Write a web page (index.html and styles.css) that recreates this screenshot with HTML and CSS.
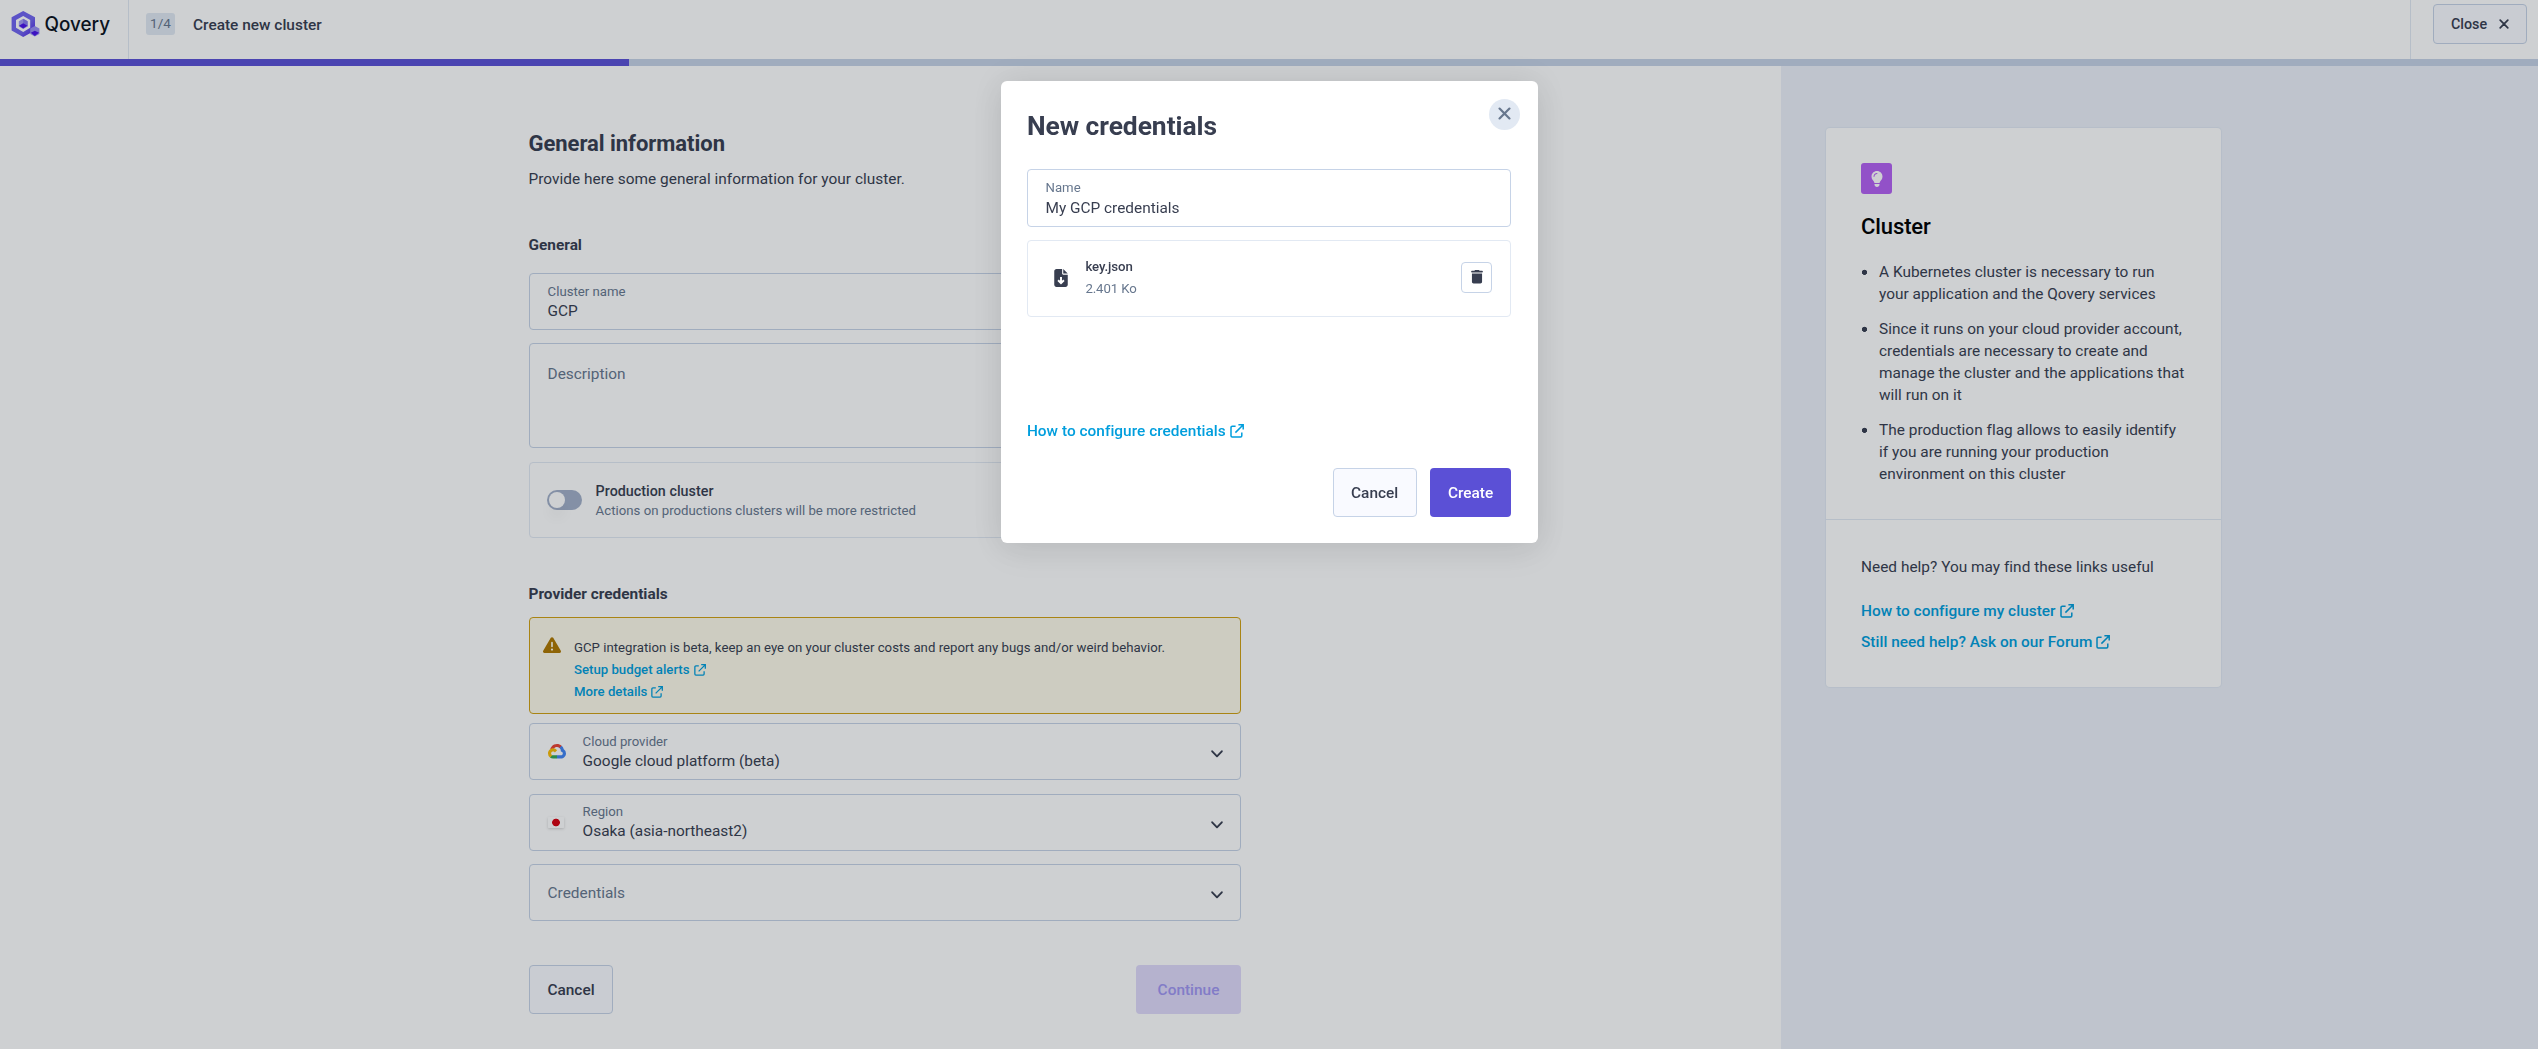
FILE: index.html
```html
<!DOCTYPE html>
<html lang="en">
<head>
<meta charset="utf-8">
<title>Create new cluster - Qovery</title>
<link rel="stylesheet" href="styles.css">
</head>
<body>
<svg class="sprite" aria-hidden="true">
  <symbol id="external" viewBox="0 0 14 14"><path d="M5.6 2.2H2.2a1.2 1.2 0 0 0-1.2 1.2v8.4A1.2 1.2 0 0 0 2.2 13h8.4a1.2 1.2 0 0 0 1.2-1.2V8.6M8.4.8h4.8v4.8M13 1 5.4 8.6" fill="none" stroke="currentColor" stroke-width="1.5"/></symbol>
  <symbol id="cross" viewBox="0 0 10 10"><path d="M1.2 1.2l7.6 7.6M8.8 1.2L1.2 8.8" fill="none" stroke="currentColor" stroke-width="1.7" stroke-linecap="round"/></symbol>
  <symbol id="chevron" viewBox="0 0 12 8"><path d="M1.2 1.3 6 6.3l4.8-5" fill="none" stroke="currentColor" stroke-width="1.9" stroke-linecap="round" stroke-linejoin="round"/></symbol>
</svg>

<div class="app">
  <header class="topbar">
    <div class="brand">
      <svg width="100" height="30" viewBox="0 0 100 30">
        <defs>
          <linearGradient id="ring" x1="0" y1="0" x2="1" y2="1"><stop offset="0" stop-color="#6f60f5"/><stop offset=".6" stop-color="#7266ef"/><stop offset="1" stop-color="#4f1ee6"/></linearGradient>
        </defs>
        <path fill="url(#ring)" fill-rule="evenodd" d="M12.2 1 24 7.2v13.2L12.2 27 .6 20.4V7.2zM12.2 6 5 9.900v7.900L12.200 22l7-4.200V9.900z"/>
        <path fill="#a49cf5" d="M12.200 8.800 16.600 11.200v5.200l-4.400 2.500-4.400-2.500v-5.200z"/>
        <path fill="#8578f0" d="M12.200 8.800 16.600 11.200v5.200l-4.400-2z"/>
        <path fill="#4a12ea" d="M12.200 13.200 16.400 15.700l-4.200 2.900L8 15.700z"/>
        <path fill="#9a90f4" d="M23.800 16 28.400 18.500v5.400l-4.600 2.600-4.600-2.600v-5.400z"/>
        <path fill="#4a12ea" d="M23.800 20.800 28 22.800 23.800 26l-4-3.200z"/>
        <text class="wordmark" x="33.500" y="21" textLength="65.500" lengthAdjust="spacingAndGlyphs">Qovery</text>
      </svg>
    </div>
    <div class="step">
      <span class="badge">1/4</span>
      <span class="step-title">Create new cluster</span>
    </div>
    <div class="topbar-end">
      <button class="close-flow">Close <svg width="10" height="10"><use href="#cross"/></svg></button>
    </div>
  </header>
  <div class="progress"><div class="progress-fill" style="width:629px"></div></div>

  <div class="columns">
    <main class="content">
      <form class="form">
        <h1>General information</h1>
        <p class="lead">Provide here some general information for your cluster.</p>

        <h2 class="first">General</h2>
        <div class="field"><div class="texts"><span class="label">Cluster name</span><span class="value">GCP</span></div></div>
        <div class="field area"><span class="placeholder">Description</span></div>
        <div class="toggle-card">
          <span class="toggle"></span>
          <div><div class="toggle-title">Production cluster</div><div class="toggle-text">Actions on productions clusters will be more restricted</div></div>
        </div>

        <h2 class="second">Provider credentials</h2>
        <div class="callout">
          <svg class="warn" width="18" height="18" viewBox="0 0 512 512"><path fill="currentColor" d="M256 32c14.200 0 27.300 7.500 34.500 19.800l216 368c7.300 12.400 7.300 27.700.2 40.100S486.300 480 472 480H40c-14.300 0-27.600-7.700-34.700-20.100s-7-27.800.2-40.100l216-368C228.700 39.500 241.800 32 256 32zm0 128c-13.300 0-24 10.700-24 24v112c0 13.300 10.700 24 24 24s24-10.700 24-24V184c0-13.300-10.700-24-24-24zm32 224a32 32 0 1 0-64 0 32 32 0 1 0 64 0z"/></svg>
          <div>
            <div>GCP integration is beta, keep an eye on your cluster costs and report any bugs and/or weird behavior.</div>
            <a class="link">Setup budget alerts <svg width="12" height="12"><use href="#external"/></svg></a>
            <a class="link">More details <svg width="12" height="12"><use href="#external"/></svg></a>
          </div>
        </div>

        <div class="field select provider">
          <span class="glyph"><svg width="18" height="14.500" viewBox="0 0 256 206"><path fill="#EA4335" d="M170.252 56.819l22.253-22.253 1.483-9.370C153.437-11.677 88.976-7.496 52.420 33.920 42.267 45.423 34.734 59.764 30.717 74.573l7.970-1.123 44.505-7.340 3.436-3.513c19.797-21.742 53.270-24.667 76.128-6.168z"/><path fill="#4285F4" d="M224.205 73.918a100.249 100.249 0 0 0-30.217-48.722l-31.232 31.232a55.515 55.515 0 0 1 20.379 44.037v5.544c15.350 0 27.797 12.445 27.797 27.796 0 15.352-12.446 27.573-27.797 27.573h-55.671l-5.466 5.934v33.340l5.466 5.231h55.670c39.930.311 72.553-31.494 72.864-71.424a72.303 72.303 0 0 0-31.793-60.541"/><path fill="#34A853" d="M71.870 205.796h55.593V161.290H71.870a27.275 27.275 0 0 1-11.400-2.498l-7.887 2.420-22.409 22.252-1.952 7.574a71.980 71.980 0 0 0 43.648 14.758"/><path fill="#FBBC05" d="M71.870 61.425C31.940 61.664-.237 94.228.001 134.158a72.301 72.301 0 0 0 28.222 56.880l32.248-32.246c-13.990-6.322-20.208-22.786-13.887-36.776 6.320-13.990 22.786-20.208 36.775-13.888a27.796 27.796 0 0 1 13.887 13.888l32.248-32.248A72.224 72.224 0 0 0 71.870 61.425"/></svg></span>
          <div class="texts"><span class="label">Cloud provider</span><span class="value">Google cloud platform (beta)</span></div>
          <svg class="chevron" width="12" height="8"><use href="#chevron"/></svg>
        </div>
        <div class="field select region">
          <span class="glyph"><span class="flag"></span></span>
          <div class="texts"><span class="label">Region</span><span class="value">Osaka (asia-northeast2)</span></div>
          <svg class="chevron" width="12" height="8"><use href="#chevron"/></svg>
        </div>
        <div class="field select credentials">
          <span class="placeholder">Credentials</span>
          <svg class="chevron" width="12" height="8"><use href="#chevron"/></svg>
        </div>

        <div class="form-actions">
          <button type="button" class="btn secondary">Cancel</button>
          <button type="button" class="btn disabled">Continue</button>
        </div>
      </form>
    </main>

    <aside class="sidebar">
      <section class="help-card">
        <div class="help-main">
          <div class="bulb"><svg width="12" height="16" viewBox="0 0 384 512"><path fill="#fff" d="M272 384c9.600-31.900 29.500-59.100 49.200-86.200 5.200-7.100 10.400-14.200 15.400-21.400 19.800-28.500 31.400-63 31.400-100.300C368 78.800 289.200 0 192 0S16 78.800 16 176c0 37.300 11.600 71.900 31.400 100.300 5 7.200 10.200 14.300 15.400 21.400 19.800 27.100 39.700 54.400 49.200 86.200H272zM192 512c44.200 0 80-35.800 80-80V416H112v16c0 44.200 35.800 80 80 80zM112 176c0 8.800-7.200 16-16 16s-16-7.200-16-16c0-61.900 50.100-112 112-112 8.800 0 16 7.200 16 16s-7.200 16-16 16c-44.200 0-80 35.800-80 80z"/></svg></div>
          <h3>Cluster</h3>
          <ul>
            <li>A Kubernetes cluster is necessary to run<br>your application and the Qovery services</li>
            <li>Since it runs on your cloud provider account,<br>credentials are necessary to create and<br>manage the cluster and the applications that<br>will run on it</li>
            <li>The production flag allows to easily identify<br>if you are running your production<br>environment on this cluster</li>
          </ul>
        </div>
        <div class="help-links">
          <p>Need help? You may find these links useful</p>
          <a class="link">How to configure my cluster <svg width="14" height="14"><use href="#external"/></svg></a>
          <a class="link">Still need help? Ask on our Forum <svg width="14" height="14"><use href="#external"/></svg></a>
        </div>
      </section>
    </aside>
  </div>
</div>

<div class="overlay">
  <div class="modal" role="dialog">
    <div class="modal-head">
      <h2>New credentials</h2>
      <button class="modal-close"><svg width="13" height="13"><use href="#cross"/></svg></button>
    </div>
    <div class="field"><div class="texts"><span class="label">Name</span><span class="value">My GCP credentials</span></div></div>
    <div class="file">
      <svg class="file-icon" width="14" height="18" viewBox="0 0 384 512"><path fill="currentColor" fill-rule="evenodd" d="M64 0C28.700 0 0 28.700 0 64v384c0 35.300 28.700 64 64 64h256c35.300 0 64-28.700 64-64V160H256c-17.700 0-32-14.300-32-32V0H64zm192 0v128h128L256 0zM220 224v112l36-36 38 38-102 102L90 338l38-38 36 36V224z"/></svg>
      <div class="file-info"><div class="file-name">key.json</div><div class="file-size">2.401 Ko</div></div>
      <button class="trash"><svg width="12" height="13.500" viewBox="0 0 448 512"><path fill="currentColor" d="M135.200 17.700C140.600 6.800 151.700 0 163.800 0h120.400c12.100 0 23.200 6.800 28.600 17.700L320 32h96c17.700 0 32 14.300 32 32s-14.300 32-32 32H32C14.300 96 0 81.700 0 64s14.300-32 32-32h96zM32 128h384v320c0 35.300-28.700 64-64 64H96c-35.300 0-64-28.700-64-64z"/></svg></button>
    </div>
    <a class="link modal-link">How to configure credentials <svg width="14" height="14"><use href="#external"/></svg></a>
    <div class="modal-actions">
      <button class="btn secondary">Cancel</button>
      <button class="btn primary">Create</button>
    </div>
  </div>
</div>
</body>
</html>
```
FILE: styles.css
```css
* { box-sizing: border-box; }
html, body { height: 100%; }
body {
  margin: 0;
  overflow: hidden;
  background: #fff;
  color: #383e50;
  font-family: Roboto, "Liberation Sans", sans-serif;
  font-size: 15.4px;
  line-height: 22px;
  letter-spacing: 0.02px;
}
h1, h2, h3, p, ul { margin: 0; padding: 0; }
button { font: inherit; letter-spacing: inherit; color: inherit; padding: 0; margin: 0; }
svg { display: block; flex: none; overflow: visible; }
.sprite { position: absolute; width: 0; height: 0; }
.app { height: 100%; display: flex; flex-direction: column; }

/* top bar */
.topbar { height: 59px; display: flex; flex: none; }
.brand { width: 129px; border-right: 1px solid #e2e9f3; padding: 10px 0 0 10.5px; }
.wordmark { font-family: Inter, sans-serif; font-size: 19.5px; font-weight: 500; fill: #0b121d; letter-spacing: 0; }
.step { flex: 1; display: flex; align-items: flex-start; padding: 13px 0 0 17px; }
.badge {
  width: 29px; height: 22px; line-height: 20px; border-radius: 3px; text-align: center;
  background: #e2e9f3; color: #67778e; font-size: 13.6px; margin-right: 18px;
}
.step-title { font-weight: 500; line-height: 24px; }
.topbar-end { width: 128px; border-left: 1px solid #e2e9f3; padding: 4px 11px 0 22px; }
.close-flow {
  width: 94px; height: 40px; display: flex; align-items: center; justify-content: center; gap: 12px;
  border: 1px solid #c6d3e7; border-radius: 4px; background: #f9faff;
  font-size: 14.3px; font-weight: 500;
}
.progress { height: 7px; flex: none; background: #c6d3e7; }
.progress-fill { height: 100%; background: #5b50d6; }

/* columns */
.columns { flex: 1; display: flex; min-height: 0; }
.content { width: 1781px; padding: 63px 0 0 529px; }
.form { width: 712px; }
h1 { font-size: 22px; line-height: 29px; font-weight: 700; letter-spacing: -0.04px; margin-left: -0.5px; }
.lead { margin: 10px 0 0 -0.5px; }
.form h2 { font-size: 15.4px; line-height: 22px; font-weight: 700; letter-spacing: 0; }
.form .first { margin: 44px 0 17px -0.5px; }
.form .second { margin: 45px 0 12px -0.5px; }

.field { height: 57px; border: 1px solid #c6d3e7; border-radius: 4px; padding: 8.5px 17px 0 17.6px; }
.texts { display: flex; flex-direction: column; }
.label { font-size: 13.2px; line-height: 18px; color: #67778e; letter-spacing: 0; }
.value { line-height: 20px; letter-spacing: 0; }
.placeholder { color: #67778e; letter-spacing: 0; }
.area { height: 105px; margin-top: 13px; padding-top: 19px; }

.toggle-card { height: 76px; margin-top: 14px; border: 1px solid #e2e9f3; border-radius: 4px; padding: 18px 17px 0; display: flex; gap: 13.6px; }
.toggle { width: 35px; height: 20px; border-radius: 10px; background: #a3b0c9; margin-top: 9px; padding: 2px; }
.toggle::before { content: ""; display: block; width: 16px; height: 16px; border-radius: 50%; background: #fff; box-shadow: 0 10px 14px rgba(0, 0, 0, .04); }
.toggle-title { font-size: 14.3px; line-height: 20px; font-weight: 500; }
.toggle-text { font-size: 13.2px; line-height: 20px; color: #67778e; }

.callout {
  height: 97px; border: 1px solid #d1a012; border-radius: 4px; background: #fefbea;
  padding: 18.5px 13px 0; display: flex; gap: 13px; font-size: 13.2px;
}
.warn { color: #b07800; margin-top: -0.5px; }
.link { display: flex; align-items: center; gap: 4px; color: #009edd; font-weight: 500; letter-spacing: 0.03px; }
.callout .link { letter-spacing: 0; }

.select { display: flex; align-items: flex-start; }
.provider { margin-top: 9px; }
.region { margin-top: 14px; }
.region .label, .region .glyph { margin-top: -0.5px; }
.credentials { margin-top: 13px; }
.credentials .placeholder { margin-top: 8px; }
.glyph { width: 35px; height: 38px; display: flex; align-items: center; }
.flag {
  width: 16px; height: 11px; margin-left: 0.5px; border-radius: 1px; box-shadow: 0 1px 3px rgba(0, 0, 0, .18);
  background: radial-gradient(circle at 50% 50%, #d8000f 0 3.5px, #fff 4.2px);
}
.chevron { margin: 17px 0 0 auto; }

.form-actions { margin-top: 44px; display: flex; justify-content: space-between; }
.btn { height: 49px; border-radius: 4px; border: 1px solid transparent; font-weight: 500; letter-spacing: 0; }
.btn.secondary { width: 84px; background: #f9faff; border-color: #c6d3e7; }
.btn.disabled { width: 105px; background: #e0dafb; color: #a096f2; }
.btn.primary { width: 81px; background: #5b50d6; color: #fff; }

/* help panel */
.sidebar { flex: 1; background: #edf1f9; padding: 62px 0 0 45px; }
.help-card { width: 395px; height: 559px; background: #fff; border-radius: 4px; box-shadow: 0 0 1px 1px rgba(198, 211, 231, .3); }
.help-main { height: 392px; padding: 35px 35px 0; border-bottom: 1px solid #e2e9f3; }
.bulb { width: 31px; height: 31px; border-radius: 3px; background: #b561f3; display: flex; align-items: center; justify-content: center; }
h3 { margin: 19px 0 20px; font-size: 22px; line-height: 28px; font-weight: 500; color: #000; letter-spacing: -0.1px; }
.help-main ul { list-style: none; display: flex; flex-direction: column; gap: 13px; }
.help-main li { padding-left: 18px; background: radial-gradient(circle 2.6px at 3.5px 11.3px, #383e50 2.3px, transparent 2.9px) no-repeat; white-space: nowrap; }
.help-links { padding: 36px 35px 0; display: flex; flex-direction: column; gap: 9px; }
.help-links p { margin-bottom: 13px; }

/* modal */
.overlay { position: fixed; inset: 0; background: rgba(11, 18, 29, .2); display: flex; justify-content: center; align-items: flex-start; padding-top: 81px; }
.modal { width: 537px; height: 462px; background: #fff; border-radius: 6px; padding: 0 26.4px; box-shadow: 0 0 32px rgba(0, 0, 0, .08), 0 10px 36px rgba(0, 0, 0, .05); }
.modal-head { height: 88px; display: flex; justify-content: space-between; }
.modal-head h2 { margin-top: 28px; font-size: 26.4px; line-height: 35px; font-weight: 700; letter-spacing: -0.04px; }
.modal-close {
  width: 31px; height: 31px; margin: 18px -9px 0 0; border: 0; border-radius: 50%;
  background: #e2e9f3; color: #67778e; display: flex; justify-content: center; padding-top: 8px;
}
.modal .field { height: 58px; }
.modal .value { margin-top: 1px; }
.file { height: 77px; margin-top: 13px; border: 1px solid #e2e9f3; border-radius: 4px; padding: 0 18px 2px 26.5px; display: flex; align-items: center; }
.file-info { margin-left: 17px; flex: 1; font-size: 13.2px; line-height: 22px; letter-spacing: -0.08px; }
.file-name { font-weight: 500; }
.file-size { color: #67778e; }
.trash { width: 31px; height: 31px; border: 1px solid #c6d3e7; border-radius: 4px; background: #fff; display: flex; justify-content: center; padding-top: 6.5px; }
.modal-link { margin-top: 103px; }
.modal-actions { margin-top: 26px; display: flex; justify-content: flex-end; gap: 13.5px; }
```
